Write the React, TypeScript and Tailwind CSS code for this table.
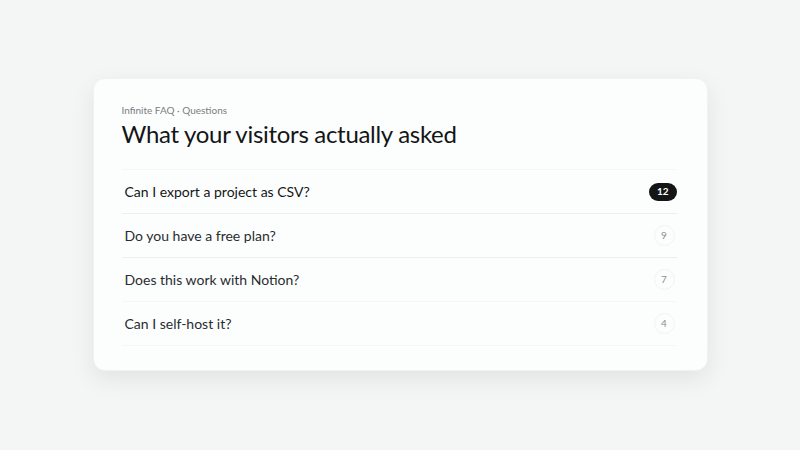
const QUESTIONS = [
  { q: 'Can I export a project as CSV?', count: 12, top: true },
  { q: 'Do you have a free plan?', count: 9 },
  { q: 'Does this work with Notion?', count: 7 },
  { q: 'Can I self-host it?', count: 4 },
]

export default function App() {
  return (
    <div className="w-[800px] h-[450px] bg-[#f4f5f5] flex items-start justify-center pt-[78px]" style={{ fontFamily: 'Lato, "Open Sans", sans-serif' }}>
      <div className="w-[615px] h-[293px] bg-[#fcfefe] rounded-xl shadow-[0_8px_24px_rgba(0,0,0,0.08)] border border-[#f0f2f2] pl-[28px] pr-[30px] pt-[24px]">
        <p className="text-[10px] text-[#7a7d7f] leading-[14px]">Infinite FAQ · Questions</p>
        <h1 className="text-[24px] leading-[30px] text-[#141516] mt-[2px] tracking-[-0.3px]">What your visitors actually asked</h1>
        <div className="mt-[20px] border-t border-[#f5f7f7]">
          {QUESTIONS.map((item, i) => (
            <div key={i} className={['h-[44px] flex items-center justify-between pl-[3px] border-b', i < 2 ? 'border-[#eceff0]' : 'border-[#f5f7f7]'].join(' ')}>
              <span className={item.top ? 'text-[14px] text-[#141516]' : 'text-[14px] text-[#2a2c2e]'}>{item.q}</span>
              {item.top ? (
                <span className="h-[18px] px-[8px] rounded-full bg-[#141516] text-white text-[10px] font-bold flex items-center">{item.count}</span>
              ) : (
                <span className="w-[21px] h-[21px] rounded-full border border-[#f1f3f3] text-[#8a8d90] text-[10px] flex items-center justify-center mr-[2px]">{item.count}</span>
              )}
            </div>
          ))}
        </div>
      </div>
    </div>
  )
}
